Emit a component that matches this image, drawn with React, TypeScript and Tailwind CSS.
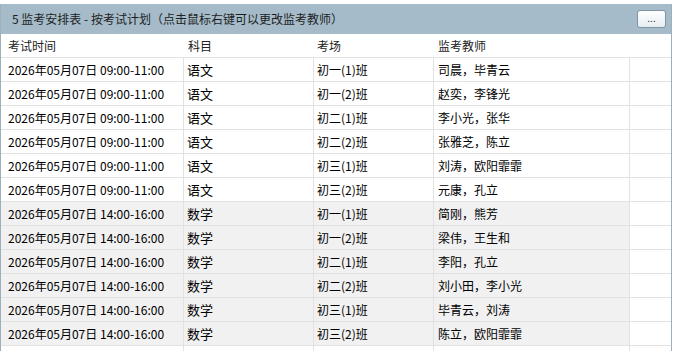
const rows = [
  { time: "2026年05月07日 09:00-11:00", subject: "语文", room: "初一(1)班", teachers: "司晨，毕青云" },
  { time: "2026年05月07日 09:00-11:00", subject: "语文", room: "初一(2)班", teachers: "赵奕，李锋光" },
  { time: "2026年05月07日 09:00-11:00", subject: "语文", room: "初二(1)班", teachers: "李小光，张华" },
  { time: "2026年05月07日 09:00-11:00", subject: "语文", room: "初二(2)班", teachers: "张雅芝，陈立" },
  { time: "2026年05月07日 09:00-11:00", subject: "语文", room: "初三(1)班", teachers: "刘涛，欧阳霏霏" },
  { time: "2026年05月07日 09:00-11:00", subject: "语文", room: "初三(2)班", teachers: "元康，孔立" },
  { time: "2026年05月07日 14:00-16:00", subject: "数学", room: "初一(1)班", teachers: "简刚，熊芳" },
  { time: "2026年05月07日 14:00-16:00", subject: "数学", room: "初一(2)班", teachers: "梁伟，王生和" },
  { time: "2026年05月07日 14:00-16:00", subject: "数学", room: "初二(1)班", teachers: "李阳，孔立" },
  { time: "2026年05月07日 14:00-16:00", subject: "数学", room: "初二(2)班", teachers: "刘小田，李小光" },
  { time: "2026年05月07日 14:00-16:00", subject: "数学", room: "初三(1)班", teachers: "毕青云，刘涛" },
  { time: "2026年05月07日 14:00-16:00", subject: "数学", room: "初三(2)班", teachers: "陈立，欧阳霏霏" },
  { time: "", subject: "", room: "", teachers: "" },
];

export default function App() {
  return (
    <div
      className="w-[677px] h-[351px] overflow-hidden bg-white pt-[4px] text-[12px] text-black"
      style={{ fontFamily: '"Noto Sans CJK SC", "Noto Sans", sans-serif' }}
    >
      <div className="w-[672px] border-l border-r border-[#9fb0bd]">
        <div className="h-[30px] bg-[#a5bbc9] flex items-center justify-between pl-[11px] pr-[5px]">
          <span className="text-[#1e1e1e]">5 监考安排表 - 按考试计划（点击鼠标右键可以更改监考教师）</span>
          <button className="w-[29px] h-[18px] rounded-[3px] border border-[#7f95a6] bg-gradient-to-b from-white to-[#e6edf2] text-[10px] leading-none flex items-center justify-center pb-[3px] text-[#333]">
            ...
          </button>
        </div>
        <div className="h-[24px] flex items-center border-b border-[#e2e2e2] text-[#222]">
          <div className="w-[183px] pl-[7px]">考试时间</div>
          <div className="w-[130px] pl-[4px]">科目</div>
          <div className="w-[120px] pl-[3px]">考场</div>
          <div className="w-[196px] pl-[4px]">监考教师</div>
        </div>
        {rows.map((r, i) => {
          const gray = i >= 6 && r.time !== "";
          return (
            <div key={i} className="h-[24px] flex border-b border-[#e2e2e2]">
              <div className={`w-[183px] pl-[7px] flex items-center border-r border-[#e2e2e2] ${gray ? "bg-[#f1f1f1]" : ""}`}>
                {r.time}
              </div>
              <div className={`w-[130px] pl-[3px] flex items-center border-r border-[#e2e2e2] text-[13px] ${gray ? "bg-[#f1f1f1]" : ""}`}>
                {r.subject}
              </div>
              <div className={`w-[120px] pl-[3px] flex items-center border-r border-[#e2e2e2] ${gray ? "bg-[#f1f1f1]" : ""}`}>
                {r.room}
              </div>
              <div className={`w-[196px] pl-[4px] flex items-center border-r border-[#e2e2e2] ${gray ? "bg-[#f1f1f1]" : ""}`}>
                {r.teachers}
              </div>
              <div className="flex-1" />
            </div>
          );
        })}
      </div>
    </div>
  );
}
